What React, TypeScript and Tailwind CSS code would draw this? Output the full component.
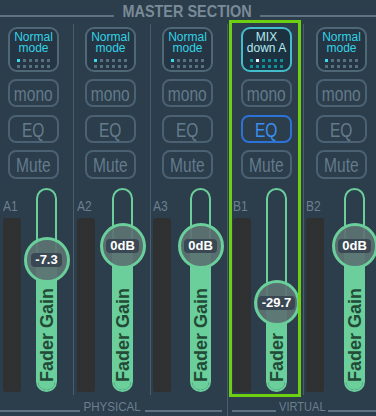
import clsx from "clsx";

const arial = "font-['Liberation_Sans',Arial,sans-serif]";

type Strip = {
  label: string;
  mix?: boolean;
  eq?: boolean;
  selected?: boolean;
  value: string;
  text: string;
  w: string;
  btn: string;
  meter: string;
  track: string;
  knob: string;
  fill: string;
};

const strips: Strip[] = [
  { label: "A1", value: "-7.3", text: "Fader Gain", w: "w-[73px]", btn: "ml-[8px]", meter: "ml-[3px]", track: "ml-[15px]", knob: "top-[47px]", fill: "top-[70px]" },
  { label: "A2", value: "0dB", text: "Fader Gain", w: "w-[76px]", btn: "ml-[11px]", meter: "ml-[3px]", track: "ml-[17px]", knob: "top-[33px]", fill: "top-[56px]" },
  { label: "A3", value: "0dB", text: "Fader Gain", w: "w-[76px]", btn: "ml-[11px]", meter: "ml-[2px]", track: "ml-[19px]", knob: "top-[33px]", fill: "top-[56px]" },
  { label: "B1", mix: true, eq: true, selected: true, value: "-29.7", text: "Fader", w: "w-[75px]", btn: "ml-[13px]", meter: "ml-[5px]", track: "ml-[15px]", knob: "top-[90px]", fill: "top-[113px]" },
  { label: "B2", value: "0dB", text: "Fader Gain", w: "w-[72px]", btn: "ml-[12px]", meter: "ml-[2px]", track: "ml-[20px]", knob: "top-[33px]", fill: "top-[56px]" },
];

function ModeButton({ mix }: { mix?: boolean }) {
  const lit = mix ? 1 : 0;
  return (
    <div
      className={clsx(
        "flex h-[45px] w-[51px] flex-col items-center rounded-[9px] border-2 pt-[3px]",
        mix ? "border-[#43bccb] bg-[#1c3240]" : "border-[#4e6878] bg-[#253543]"
      )}
    >
      <div
        className={clsx(
          "text-center text-[12px] leading-[11px]",
          arial,
          mix ? "text-[#b4eaf2]" : "text-[#34d2e6]"
        )}
      >
        {mix ? (
          <>
            MIX
            <br />
            down A
          </>
        ) : (
          <>
            Normal
            <br />
            mode
          </>
        )}
      </div>
      <div className="mt-[5px] grid grid-cols-6 gap-[3px]">
        {Array.from({ length: 12 }).map((_, i) => (
          <span
            key={i}
            className={clsx(
              "h-[3px] w-[3px]",
              i === lit
                ? mix
                  ? "bg-[#e2f8fb]"
                  : "bg-[#38d8ee]"
                : mix
                  ? "bg-[#128e9b]"
                  : "bg-[#55707f]"
            )}
          />
        ))}
      </div>
    </div>
  );
}

function PlainButton({ label, active, h }: { label: string; active?: boolean; h: string }) {
  return (
    <div
      className={clsx(
        "flex w-[51px] items-center justify-center rounded-[8px] border-2",
        h,
        active ? "border-[#2d72d6]" : "border-[#4a6273]"
      )}
    >
      <span
        className={clsx(
          "inline-block scale-x-[0.74] whitespace-nowrap text-[21px] leading-none",
          arial,
          active ? "text-[#3a8ff2]" : "text-[#637b8c]"
        )}
      >
        {label}
      </span>
    </div>
  );
}

function StripView({ s }: { s: Strip }) {
  return (
    <div className={clsx("relative flex flex-col pt-[7px]", s.w)}>
      <div className={s.btn}>
        <ModeButton mix={s.mix} />
        <div className="mt-[7px]">
          <PlainButton label="mono" h="h-[28px]" />
        </div>
        <div className="mt-[8px]">
          <PlainButton label="EQ" h="h-[28px]" active={s.eq} />
        </div>
        <div className="mt-[7px]">
          <PlainButton label="Mute" h="h-[29px]" />
        </div>
      </div>

      <div className="mt-[9px] flex h-[204px]">
        <div className={clsx("flex w-[18px] flex-col", s.meter)}>
          <div className="h-[30px]">
            <div
              className={clsx(
                "mt-[10px] inline-block origin-left scale-x-[0.8] text-[15px] leading-[15px] text-[#6a8090]",
                arial
              )}
            >
              {s.label}
            </div>
          </div>
          <div className="flex-1 rounded-[3px] bg-[#1a1b1c] bg-[radial-gradient(circle,#303132_0.7px,transparent_0.9px)] bg-[length:2px_2px]" />
        </div>

        <div className={clsx("relative h-[204px] w-[21px] rounded-full border-2 border-[#6bcf9b]", s.track)}>
          <div className={clsx("absolute inset-x-0 bottom-0 overflow-hidden rounded-b-full bg-[#6bcf9b]", s.fill)}>
            <span
              className={clsx(
                "absolute bottom-[8px] left-1/2 -translate-x-1/2 rotate-180 whitespace-nowrap text-[18px] font-bold leading-[16px] text-[#224a37] [writing-mode:vertical-rl]",
                arial
              )}
            >
              {s.text}
            </span>
          </div>
          <div
            className={clsx(
              "absolute left-1/2 flex h-[46px] w-[46px] -translate-x-1/2 items-center justify-center rounded-full border-[3px] border-[#6bcf9b] bg-[rgba(92,114,114,0.92)]",
              s.knob
            )}
          >
            <span className={clsx("rounded-[4px] bg-[#3a4853] px-[4px] text-[13px] font-bold leading-[14px] text-white", arial)}>
              {s.value}
            </span>
          </div>
        </div>
      </div>

      {s.selected && (
        <div className="pointer-events-none absolute inset-y-0 left-[1px] right-[2px] border-[3px] border-[#6ccf12]" />
      )}
    </div>
  );
}

function Divider({ full }: { full?: boolean }) {
  return <div className={clsx("w-px bg-[#4a5e6e]", full ? "mt-[4px]" : "mb-[2px] mt-[4px]")} />;
}

export default function App() {
  return (
    <div className={clsx("flex h-[416px] w-[376px] flex-col overflow-hidden bg-[#2c3d4b]", arial)}>
      <div className="flex h-[20px] items-end">
        <div className="mb-[3px] h-[2px] w-[114px] bg-[#5f7282]" />
        <div className="flex w-[146px] justify-center">
          <span className="inline-block scale-x-[0.85] whitespace-nowrap text-[17px] font-bold leading-[17px] text-[#7a8b98]">
            MASTER SECTION
          </span>
        </div>
        <div className="mb-[3px] h-[2px] flex-1 bg-[#5f7282]" />
      </div>

      <div className="flex h-[377px]">
        <StripView s={strips[0]} />
        <Divider />
        <StripView s={strips[1]} />
        <Divider />
        <StripView s={strips[2]} />
        <Divider full />
        <StripView s={strips[3]} />
        <Divider />
        <StripView s={strips[4]} />
      </div>

      <div className="flex h-[19px]">
        <div className="flex w-[227px] items-end pb-[3px] pr-[5px]">
          <div className="mb-[1px] h-[2px] w-[80px] bg-[#5f7282]" />
          <div className="flex w-[65px] justify-center">
            <span className="inline-block scale-x-[0.89] whitespace-nowrap text-[13px] leading-[12px] text-[#6a8090]">
              PHYSICAL
            </span>
          </div>
          <div className="mb-[1px] h-[2px] flex-1 bg-[#5f7282]" />
        </div>
        <div className="w-px bg-[#4a5e6e]" />
        <div className="flex flex-1 items-end pb-[3px] pl-[4px]">
          <div className="mb-[1px] h-[2px] w-[44px] bg-[#5f7282]" />
          <div className="flex w-[52px] justify-center">
            <span className="inline-block scale-x-[0.85] whitespace-nowrap text-[13px] leading-[12px] text-[#6a8090]">
              VIRTUAL
            </span>
          </div>
          <div className="mb-[1px] h-[2px] flex-1 bg-[#5f7282]" />
        </div>
      </div>
    </div>
  );
}
